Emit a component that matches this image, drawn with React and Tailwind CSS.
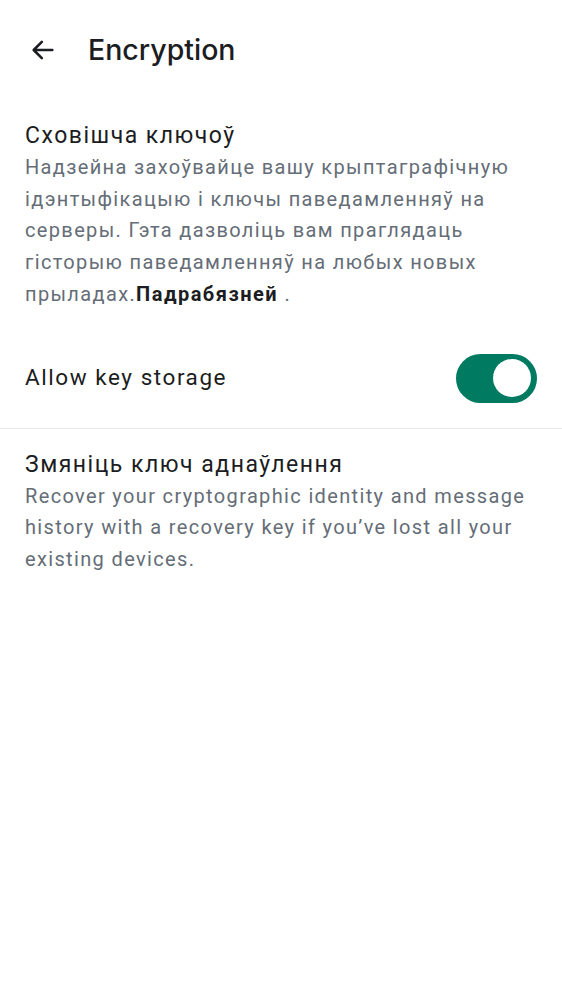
export default function App() {
  const body = { fontFamily: "Roboto, 'Noto Sans', sans-serif" };
  return (
    <div className="w-[562px] h-[1000px] bg-white" style={body}>
      <div className="flex items-center h-[100px] pl-[29px]">
        <svg width="28" height="28" viewBox="0 0 24 24" className="text-[#1b1d22]">
          <path d="M20 12H4.5M11 5l-7 7 7 7" fill="none" stroke="currentColor" strokeWidth="2.2" strokeLinecap="round" strokeLinejoin="round" />
        </svg>
        <div className="ml-[31px] text-[28.5px] font-medium text-[#1b1d22]" style={{ fontFamily: "Inter, sans-serif" }}>Encryption</div>
      </div>
      <div className="px-[25px] pt-[20px]">
        <div className="text-[23px] leading-[32px] tracking-[1.5px] text-[#1b1d22]">Сховішча ключоў</div>
        <div className="text-[20px] leading-[31.7px] tracking-[1.35px] text-[#656d77]">
          Надзейна захоўвайце вашу крыптаграфічную ідэнтыфікацыю і ключы паведамленняў на серверы. Гэта дазволіць вам праглядаць гісторыю паведамленняў на любых новых прыладах.<span className="font-bold tracking-[1.5px] text-[#1b1d22]">Падрабязней</span> .
        </div>
      </div>
      <div className="flex items-center justify-between px-[25px] h-[100px] mt-[18px] border-b border-[#e6e8eb]">
        <div className="text-[22.5px] tracking-[1.55px] text-[#1b1d22]">Allow key storage</div>
        <div className="w-[81px] h-[49px] rounded-full bg-[#007a61] flex items-center justify-end pr-[6px]">
          <div className="w-[38px] h-[38px] rounded-full bg-white" />
        </div>
      </div>
      <div className="px-[25px] pt-[20px]">
        <div className="text-[23px] leading-[32px] tracking-[1.5px] text-[#1b1d22]">Змяніць ключ аднаўлення</div>
        <div className="text-[20px] leading-[31.7px] tracking-[1.35px] text-[#656d77]">
          Recover your cryptographic identity and message history with a recovery key if you’ve lost all your existing devices.
        </div>
      </div>
    </div>
  );
}
